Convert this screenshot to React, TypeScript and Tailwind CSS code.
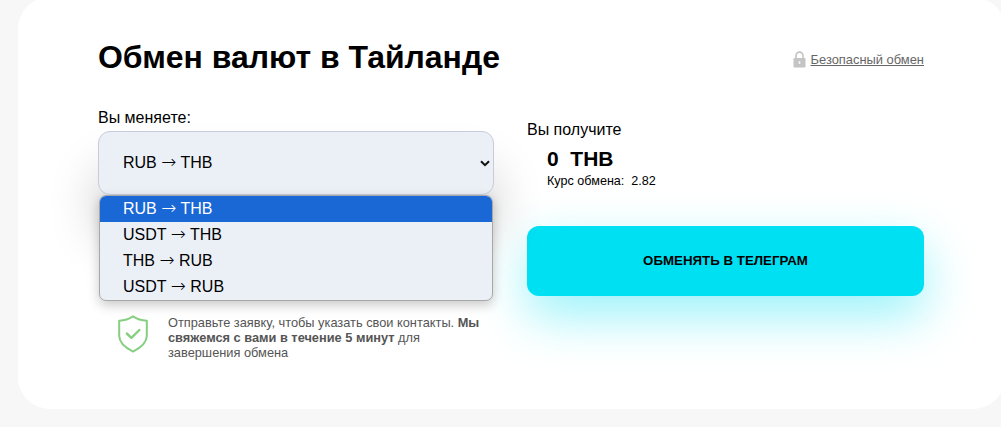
const rows = [
  ["RUB", "THB"],
  ["USDT", "THB"],
  ["THB", "RUB"],
  ["USDT", "RUB"],
]

function Pair({ from, to }: { from: string; to: string }) {
  return (
    <span>
      {from} <span className="font-['DejaVu_Sans',sans-serif] text-[18px] font-extralight leading-none">→</span> {to}
    </span>
  )
}

function LockIcon() {
  return (
    <svg width="13" height="17" viewBox="0 0 13 17" className="shrink-0">
      <path d="M3 8V4.6a3.5 3.5 0 0 1 7 0V8" fill="none" stroke="#c4c4c4" strokeWidth="1.6" />
      <rect x="0.5" y="7" width="12" height="9.5" rx="1.2" fill="#c4c4c4" />
      <rect x="5.7" y="10" width="1.6" height="3" fill="#f2f2f2" />
    </svg>
  )
}

function ShieldIcon() {
  return (
    <svg width="30" height="38" viewBox="0 0 30 38" fill="none" className="shrink-0">
      <path
        d="M15 1.3 C18.5 3.6 24 5.4 28.8 5.8 V21 C28.8 28 22 33 15 36.6 C8 33 1.2 28 1.2 21 V5.8 C6 5.4 11.5 3.6 15 1.3 Z"
        stroke="#86cf80"
        strokeWidth="2"
        strokeLinejoin="round"
      />
      <path d="M8.8 18.5 L13.4 22.8 L21.4 15" stroke="#86cf80" strokeWidth="2.4" strokeLinecap="round" strokeLinejoin="round" />
    </svg>
  )
}

export default function App() {
  return (
    <main className="h-[427px] w-[1001px] overflow-hidden bg-[#f7f7f7] pl-[18px] font-['Liberation_Sans',Arial,sans-serif] text-black">
      <div className="-mt-[3px] h-[412px] w-[987px] rounded-[32px] bg-white pl-[80px] pr-[81px] pt-[41px]">
        {/* шапка */}
        <div className="flex items-center justify-between">
          <h1 className="text-[31.95px] font-bold leading-[38px]">Обмен валют в Тайланде</h1>
          <div className="flex items-center gap-[5px] pt-[5px]">
            <LockIcon />
            <a className="text-[12.9px] leading-[14px] text-[#666] underline">Безопасный обмен</a>
          </div>
        </div>

        <div className="mt-[33px] flex gap-[33px]">
          {/* левая колонка */}
          <div className="w-[396px]">
            <div className="text-[16px] leading-[18px]">Вы меняете:</div>
            <div className="relative mt-[4px]">
              <div className="flex h-[64px] items-center justify-between rounded-[12px] border border-[#c6ccda] bg-[#ebf0f7] pl-[24px] pr-[2px] text-[16px] shadow-[0_40px_50px_rgba(0,0,0,0.2)]">
                <Pair from="RUB" to="THB" />
                <svg width="10" height="7" viewBox="0 0 10 7" fill="none" className="mr-[1px]">
                  <path d="M1 1.2 L5 5.2 L9 1.2" stroke="#111" strokeWidth="2" />
                </svg>
              </div>
              <div className="absolute left-[1px] right-[1px] top-[64px] z-10 overflow-hidden rounded-[7px] border border-[#a8a8a8] bg-[#ebf0f7] text-[16px] leading-[26px] shadow-[0_4px_12px_rgba(0,0,0,0.22)]">
                {rows.map(([from, to], i) => (
                  <div key={from + to} className={i === 0 ? "h-[26px] bg-[#1a67d6] pl-[23px] text-white" : "h-[26px] pl-[23px]"}>
                    <Pair from={from} to={to} />
                  </div>
                ))}
              </div>
            </div>
            <div className="relative mt-[120px] flex gap-[20px] pl-[20px]">
              <ShieldIcon />
              <p className="w-[316px] text-[12.8px] leading-[15px] text-[#555]">
                Отправьте заявку, чтобы указать свои контакты. <b>Мы свяжемся с вами в течение 5 минут</b> для завершения обмена
              </p>
            </div>
          </div>

          {/* правая колонка */}
          <div className="w-[397px] pt-[12px]">
            <div className="text-[16px] leading-[18px]">Вы получите</div>
            <div className="pl-[20px]">
              <div className="mt-[8px] text-[21px] font-bold leading-[24px]">0&nbsp; THB</div>
              <div className="mt-[3px] text-[12.6px] leading-[14px]">Курс обмена:&nbsp; 2.82</div>
            </div>
            <button className="mt-[38px] flex h-[70px] w-full items-center justify-center rounded-[12px] bg-[#00e0f3] text-[13.3px] font-bold shadow-[0_20px_50px_rgba(0,224,243,0.4)]">
              ОБМЕНЯТЬ В ТЕЛЕГРАМ
            </button>
          </div>
        </div>
      </div>
    </main>
  )
}
